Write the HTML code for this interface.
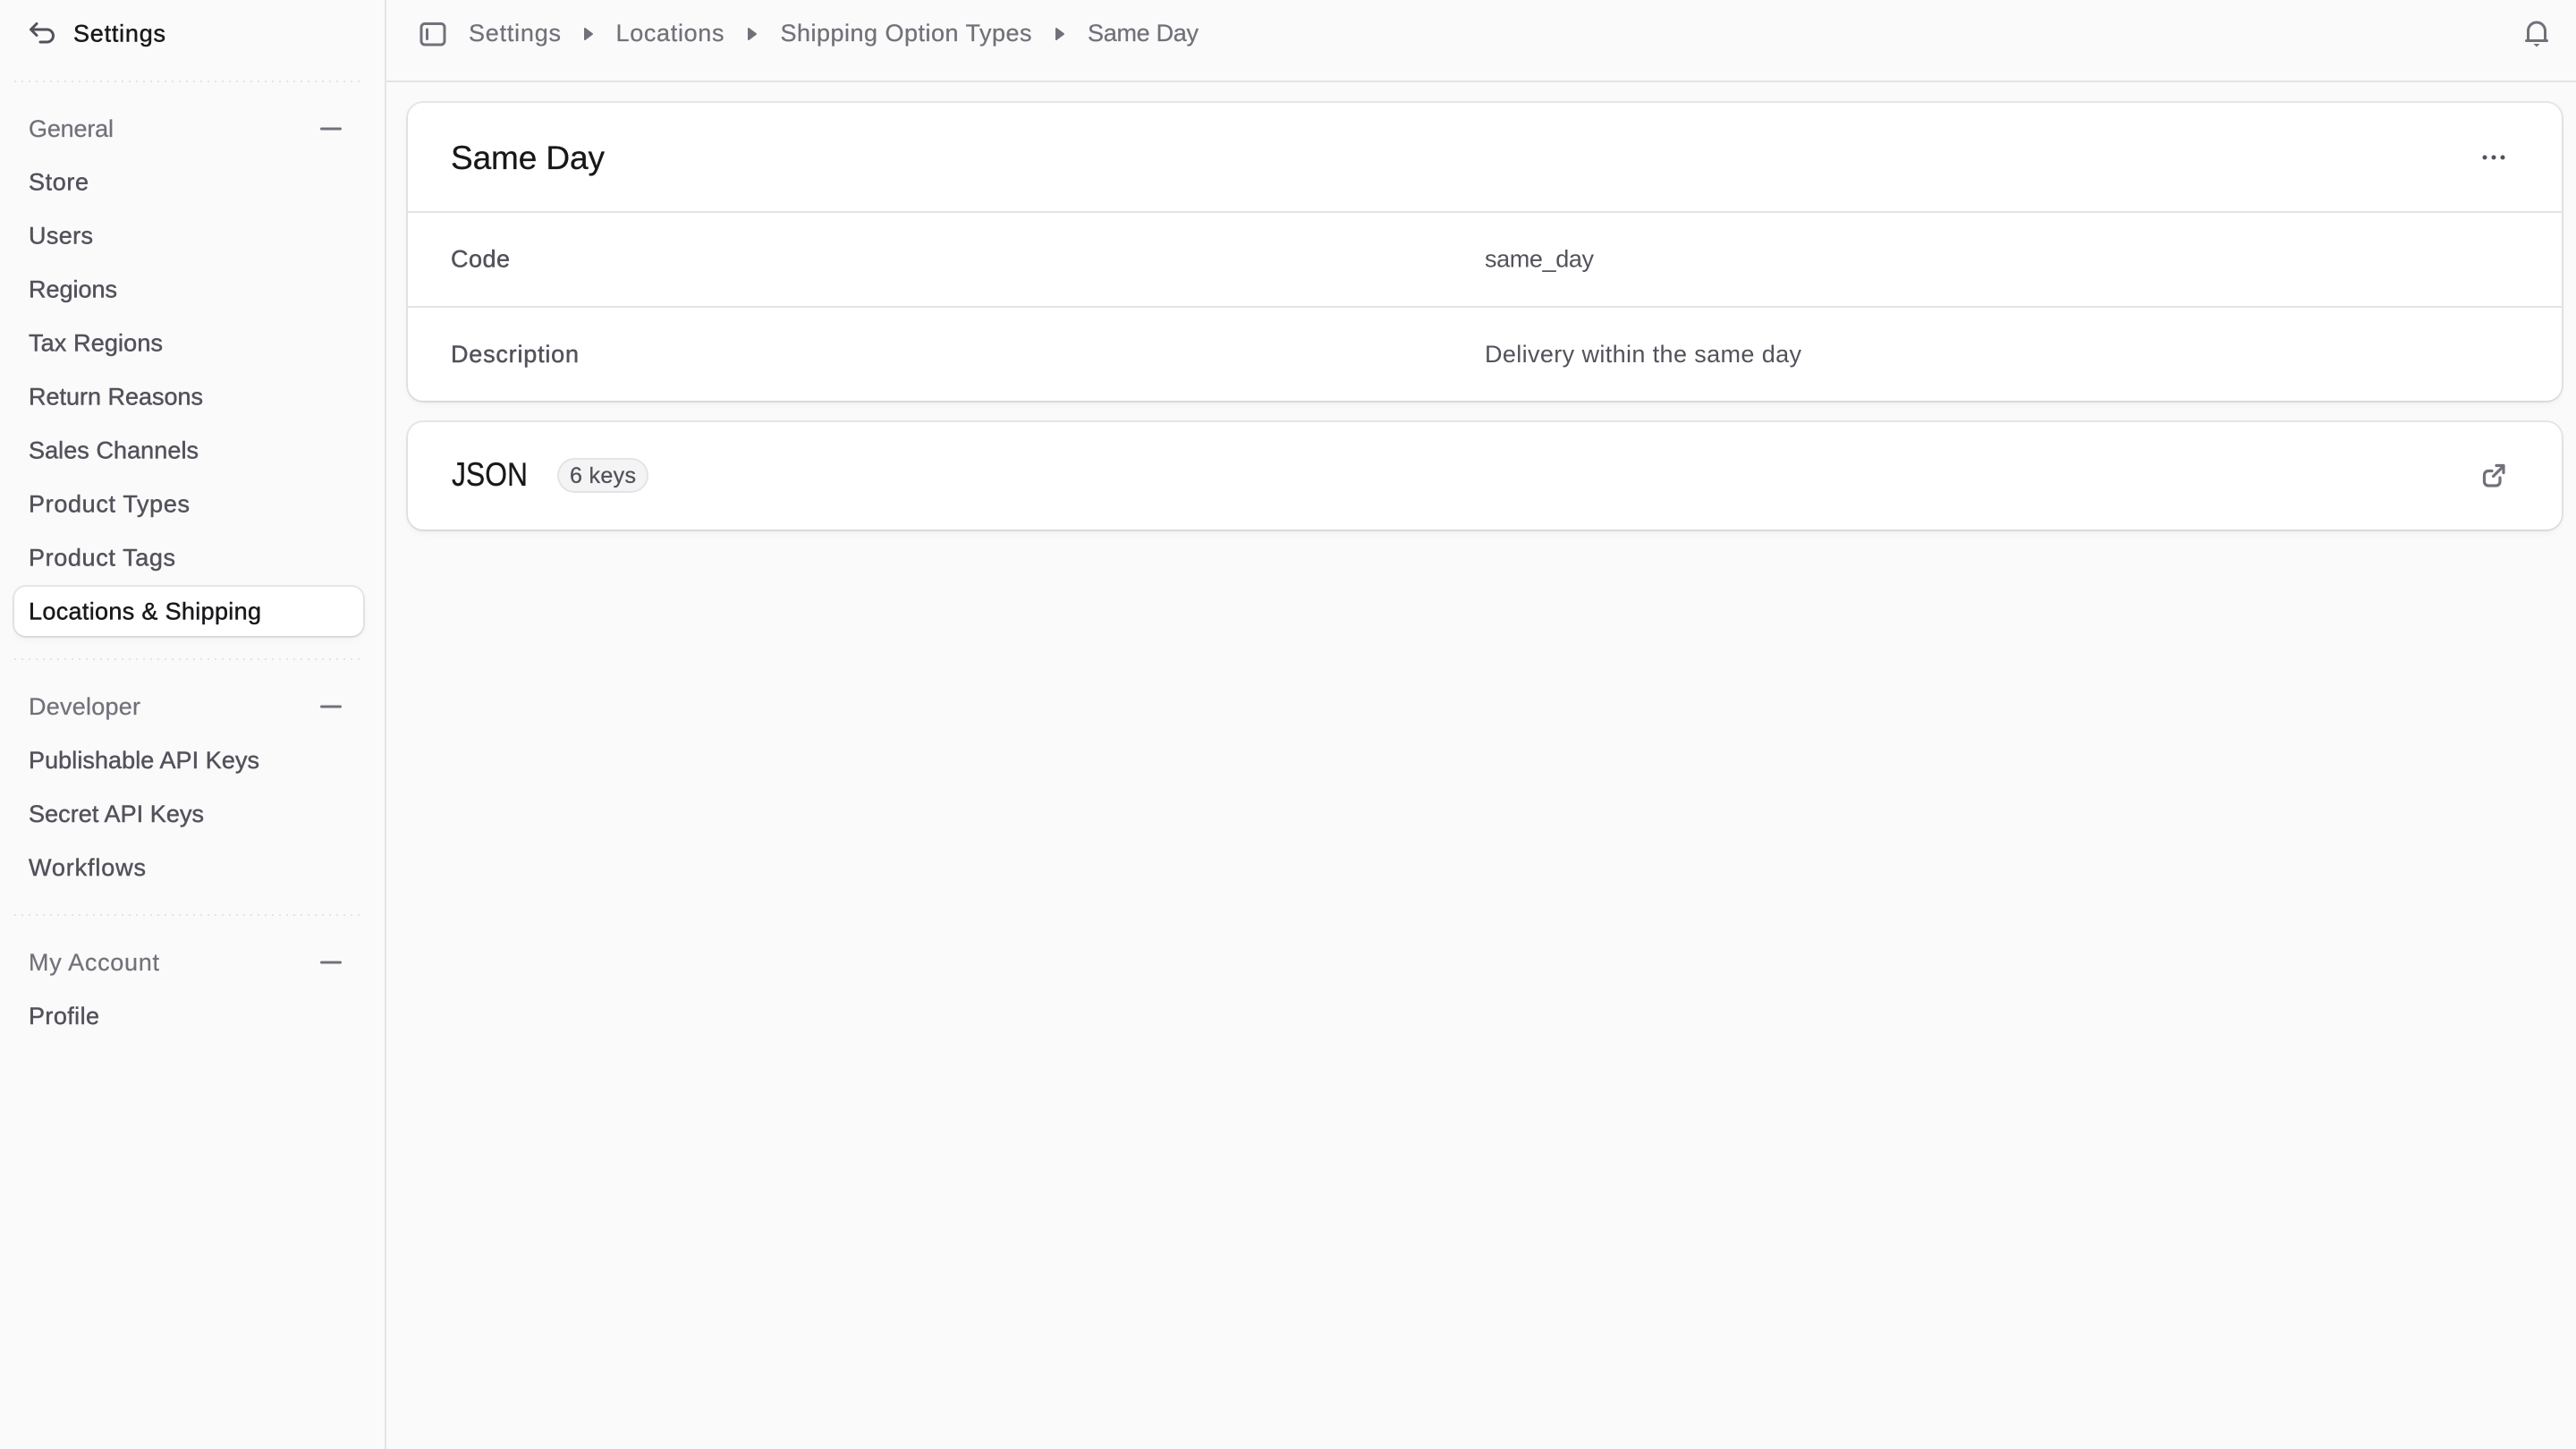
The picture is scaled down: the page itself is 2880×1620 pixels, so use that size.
<!DOCTYPE html>
<html lang="en">
<head>
<meta charset="utf-8">
<title>Same Day</title>
<style>
html,body{margin:0;padding:0;width:2880px;height:1620px;overflow:hidden;background:#fafafa}
.card{position:absolute;background:#fff;border-radius:17px;box-shadow:0 0 0 2px rgba(0,0,0,.08),0 2px 4px -2px rgba(0,0,0,.08),0 4px 8px rgba(0,0,0,.04)}
.active{position:absolute;left:16px;top:656px;width:390px;height:55px;background:#fff;border-radius:13px;box-shadow:0 0 0 2px rgba(0,0,0,.08),0 2px 4px -2px rgba(0,0,0,.08),0 4px 8px rgba(0,0,0,.04)}
svg{position:absolute;left:0;top:0}
text{font-family:"Liberation Sans",sans-serif;font-size:27px;stroke-width:.45px;stroke-linejoin:round}
.s{fill:#52525b;stroke:#52525b}
.v{fill:#52525b;stroke:none}
.m{fill:#71717a;stroke:#71717a;stroke-width:.25px}
.b{fill:#18181b;stroke:#18181b}
.h{font-size:37px;fill:#18181b;stroke:#18181b;stroke-width:.3px}
.k{font-size:25px;fill:#52525b;stroke:#52525b;stroke-width:.3px}
</style>
</head>
<body>
<div class="card" style="left:456px;top:115px;width:2408px;height:333px"></div>
<div class="card" style="left:456px;top:472px;width:2408px;height:120px"></div>
<div class="active"></div>
<svg width="2880" height="1620" viewBox="0 0 2880 1620" xmlns="http://www.w3.org/2000/svg">
  <!-- structure lines -->
  <rect x="430" y="0" width="2" height="1620" fill="#e4e4e7"/>
  <rect x="432" y="90" width="2448" height="2" fill="#e4e4e7"/>
  <rect x="456" y="236" width="2408" height="2" fill="#e4e4e7"/>
  <rect x="456" y="342" width="2408" height="2" fill="#e4e4e7"/>
  <g stroke="#e4e4e7" stroke-width="2" stroke-dasharray="2 6" fill="none">
    <path d="M16 91H404"/>
    <path d="M16 737H404"/>
    <path d="M16 1023H404"/>
  </g>

  <!-- back icon -->
  <path d="M41 26.5L34.5 33L41 39.5M34.5 33H52.5a7 7 0 0 1 0 14H45" fill="none" stroke="#52525b" stroke-width="3" stroke-linecap="round" stroke-linejoin="round"/>
  <text class="b" x="82" y="46.500" textLength="103">Settings</text>

  <!-- sidebar -->
  <text class="m" x="32" y="153" textLength="95">General</text>
  <path d="M359.500 144H380.500" stroke="#71717a" stroke-width="3" stroke-linecap="round"/>
  <text class="s" x="32" y="212.500" textLength="67">Store</text>
  <text class="s" x="32" y="272.500" textLength="72">Users</text>
  <text class="s" x="32" y="332.500" textLength="99">Regions</text>
  <text class="s" x="32" y="392.500" textLength="150">Tax Regions</text>
  <text class="s" x="32" y="452.500" textLength="195">Return Reasons</text>
  <text class="s" x="32" y="512.500" textLength="190">Sales Channels</text>
  <text class="s" x="32" y="572.500" textLength="180">Product Types</text>
  <text class="s" x="32" y="632.500" textLength="164">Product Tags</text>
  <text class="b" x="32" y="692.500" textLength="260">Locations &amp; Shipping</text>

  <text class="m" x="32" y="799" textLength="125">Developer</text>
  <path d="M359.500 790H380.500" stroke="#71717a" stroke-width="3" stroke-linecap="round"/>
  <text class="s" x="32" y="859" textLength="258">Publishable API Keys</text>
  <text class="s" x="32" y="919" textLength="196">Secret API Keys</text>
  <text class="s" x="32" y="979" textLength="131">Workflows</text>

  <text class="m" x="32" y="1085" textLength="146">My Account</text>
  <path d="M359.500 1076H380.500" stroke="#71717a" stroke-width="3" stroke-linecap="round"/>
  <text class="s" x="32" y="1145" textLength="79">Profile</text>

  <!-- top bar -->
  <rect x="471" y="26.500" width="26" height="23.500" rx="4" fill="none" stroke="#71717a" stroke-width="3"/>
  <path d="M477.500 33V43.500" stroke="#71717a" stroke-width="3" stroke-linecap="round"/>
  <text class="m" x="524" y="46" textLength="103">Settings</text>
  <path d="M654 32L662 38L654 44Z" fill="#71717a" stroke="#71717a" stroke-width="2" stroke-linejoin="round"/>
  <text class="m" x="688.500" y="46" textLength="121">Locations</text>
  <path d="M837 32L845 38L837 44Z" fill="#71717a" stroke="#71717a" stroke-width="2" stroke-linejoin="round"/>
  <text class="m" x="872.500" y="46" textLength="281">Shipping Option Types</text>
  <path d="M1181 32L1189 38L1181 44Z" fill="#71717a" stroke="#71717a" stroke-width="2" stroke-linejoin="round"/>
  <text class="m" x="1216" y="46" textLength="124">Same Day</text>

  <!-- bell -->
  <path d="M2826.500 45.500V34.500a9.500 9.500 0 0 1 19 0V45.500" fill="none" stroke="#71717a" stroke-width="3"/>
  <path d="M2824.500 45.500H2847.500" stroke="#71717a" stroke-width="3" stroke-linecap="round"/>
  <path d="M2832.500 49H2839.500L2836 52.500Z" fill="#71717a"/>

  <!-- card 1 -->
  <text class="h" x="504" y="189" textLength="172">Same Day</text>
  <circle cx="2778" cy="176" r="2.500" fill="#52525b"/>
  <circle cx="2788" cy="176" r="2.500" fill="#52525b"/>
  <circle cx="2798" cy="176" r="2.500" fill="#52525b"/>
  <text class="s" x="504" y="298.500" textLength="66">Code</text>
  <text class="v" x="1660" y="298.500" textLength="122">same_day</text>
  <text class="s" x="504" y="405" textLength="143">Description</text>
  <text class="v" x="1660" y="405" textLength="354">Delivery within the same day</text>

  <!-- card 2 -->
  <text class="h" x="505" y="543" textLength="85" lengthAdjust="spacingAndGlyphs">JSON</text>
  <rect x="624" y="513" width="100" height="37" rx="18.500" fill="#f4f4f5" stroke="#e4e4e7" stroke-width="2"/>
  <text class="k" x="637" y="540" textLength="74">6 keys</text>
  <path d="M2786 526.500H2782a4.500 4.500 0 0 0 -4.500 4.500V538.500a4.500 4.500 0 0 0 4.500 4.500H2790.500a4.500 4.500 0 0 0 4.500 -4.500V534" fill="none" stroke="#71717a" stroke-width="3.200" stroke-linecap="round"/>
  <path d="M2787.500 532.500L2799 521M2791 520.500H2799V528.500" fill="none" stroke="#71717a" stroke-width="3.200" stroke-linecap="round" stroke-linejoin="round"/>
</svg>
</body>
</html>
